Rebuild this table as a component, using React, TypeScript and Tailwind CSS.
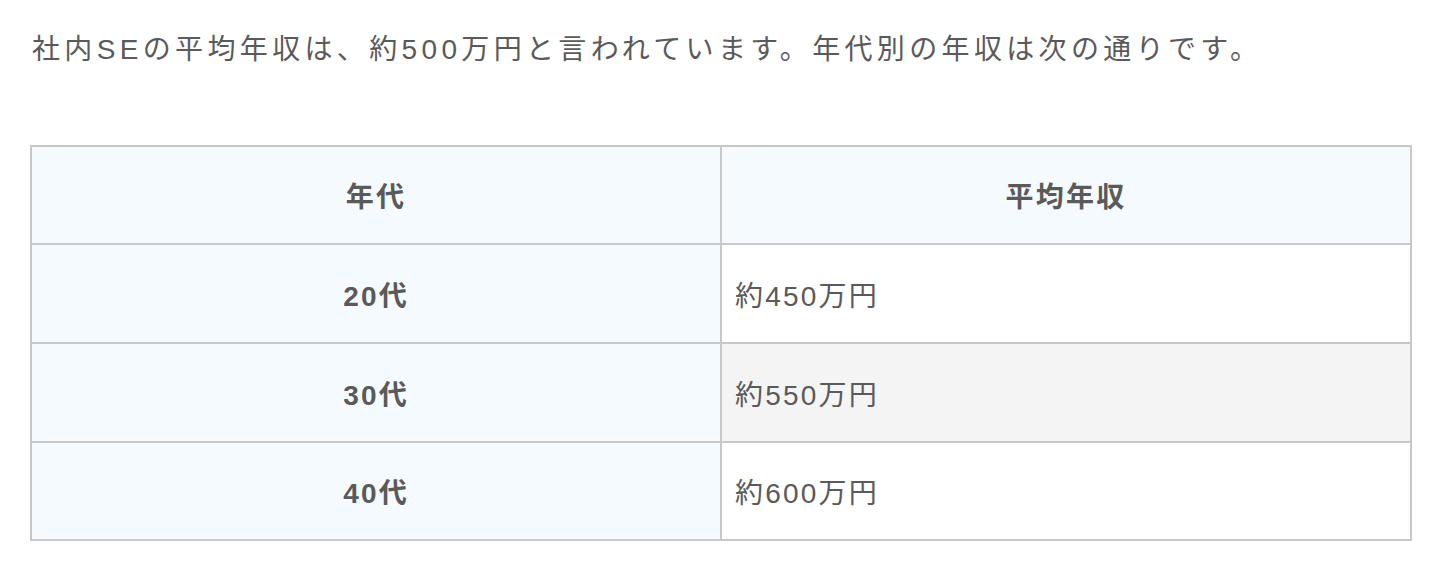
import React from "react";

const rows = [
  { age: "20代", pay: "約450万円", alt: false, h: "h-[99px]" },
  { age: "30代", pay: "約550万円", alt: true, h: "h-[99px]" },
  { age: "40代", pay: "約600万円", alt: false, h: "h-[98px]" },
];

export default function App() {
  return (
    <div
      className="bg-white w-[1444px] h-[574px] pl-[30px] pr-[32px] pt-[29px] text-[#5a5a5a]"
      style={{ fontFamily: '"Liberation Sans", "Noto Sans CJK JP", sans-serif' }}
    >
      <p className="pl-[2px] text-[28px] leading-[42px] tracking-[4.35px]">
        社内SEの平均年収は、約500万円と言われています。年代別の年収は次の通りです。
      </p>
      <table className="mt-[74px] w-[1382px] border-collapse border-2 border-[#c8c8c8] text-[28px] leading-[40px] tracking-[2.2px]">
        <thead>
          <tr className="bg-[#f5faff] h-[98px]">
            <th className="w-1/2 border-2 border-[#c8c8c8] font-bold text-center pt-[6px]">年代</th>
            <th className="w-1/2 border-2 border-[#c8c8c8] font-bold text-center pt-[6px]">平均年収</th>
          </tr>
        </thead>
        <tbody>
          {rows.map((r) => (
            <tr key={r.age} className={r.h}>
              <td className="border-2 border-[#c8c8c8] bg-[#f5faff] text-center font-bold pt-[6px]">{r.age}</td>
              <td
                className={
                  r.alt
                    ? "border-2 border-[#c8c8c8] bg-[#f4f4f4] pl-[13px] pt-[6px]"
                    : "border-2 border-[#c8c8c8] bg-white pl-[13px] pt-[6px]"
                }
              >
                {r.pay}
              </td>
            </tr>
          ))}
        </tbody>
      </table>
    </div>
  );
}
